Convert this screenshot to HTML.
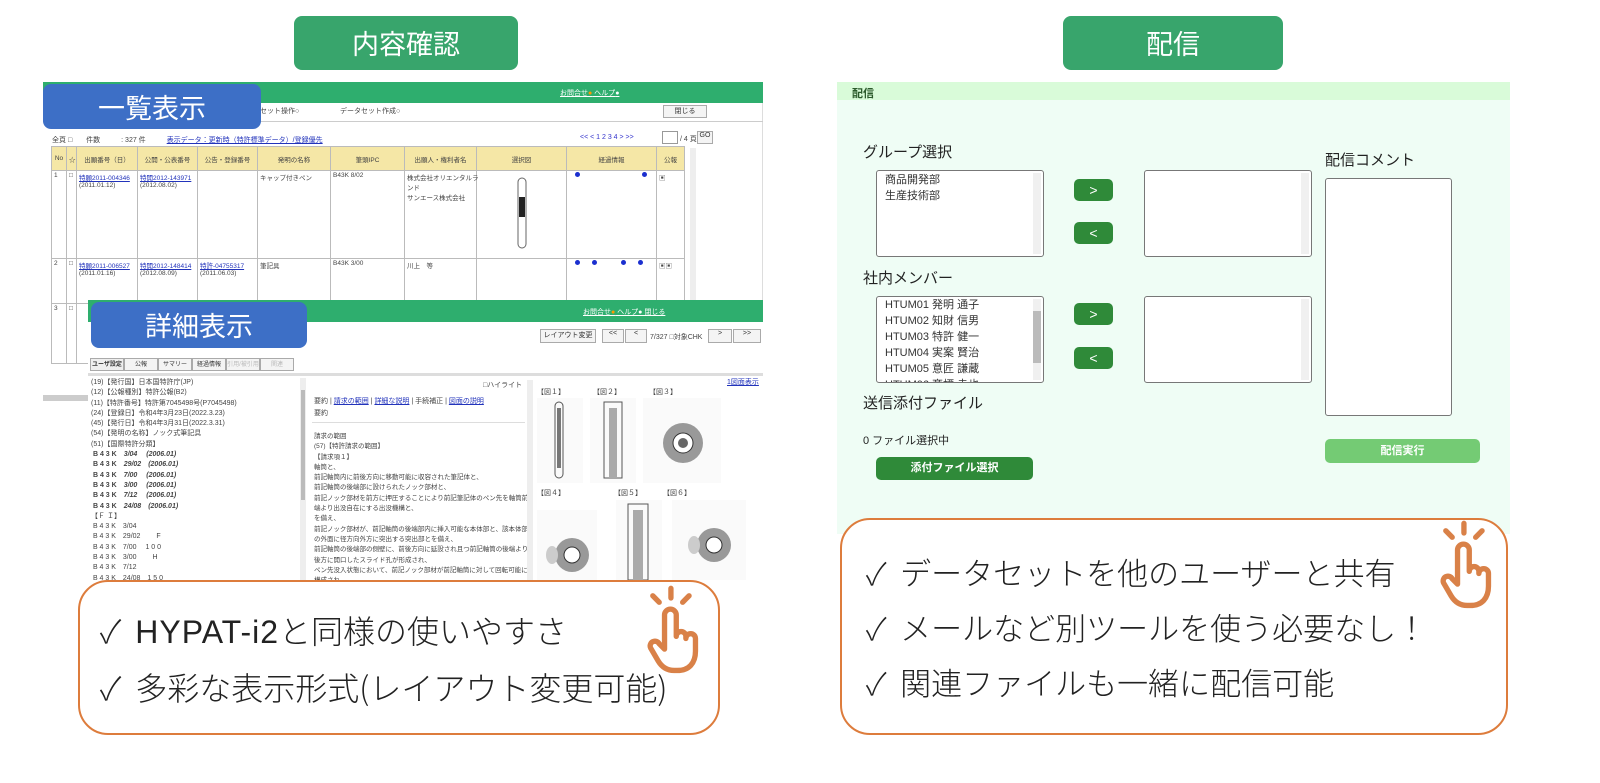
<!DOCTYPE html>
<html><head><meta charset="utf-8">
<style>
*{margin:0;padding:0;box-sizing:border-box}
body{width:1600px;height:783px;background:#fff;position:relative;overflow:hidden;font-family:"Liberation Sans","Noto Sans CJK JP",sans-serif;color:#333}
.a{position:absolute}
.pill{background:#38a56c;color:#fff;border-radius:8px;font-size:27px;text-align:center;line-height:53px;font-family:"Noto Sans CJK JP",sans-serif}
.blue{background:#3d6fc6;color:#fff;border-radius:8px;font-size:27px;text-align:center;font-family:"Noto Sans CJK JP",sans-serif}
.gbar{background:#2eae6e}
.t{font-size:7px;color:#444;white-space:nowrap}
.lk{color:#2233bb;text-decoration:underline}
.btn{border:1px solid #aaa;background:#f4f4f4;font-size:7px;text-align:center;color:#333}
table.l{border-collapse:collapse;font-size:6.5px}
table.l td{border:1px solid #bbb;vertical-align:top;padding:1px 2px;color:#444;white-space:nowrap}
table.l tr.h td{background:#f5e7a6;text-align:center;vertical-align:middle}
.dot{display:inline-block;width:5px;height:5px;border-radius:50%;background:#1b2fcf}
.call{border:2px solid #dd7c3c;border-radius:30px;background:#fff}
.cp{position:absolute;font-size:31px;color:#222;font-weight:300;white-space:nowrap;font-family:"Noto Sans CJK JP",sans-serif;line-height:40px}
.lab{font-size:15px;color:#222;font-family:"Noto Sans CJK JP",sans-serif}
.box{background:#fff;border:1px solid #777;border-radius:3px}
.gb{background:#2f8a39;border-radius:5px;color:#fff;text-align:center;font-size:14px}
.sb{position:absolute;right:2px;top:2px;bottom:2px;width:8px;background:#f0f0f0}
</style></head><body>

<div class="a pill" style="left:294px;top:16px;width:224px;height:54px">内容確認</div>
<div class="a pill" style="left:1063px;top:16px;width:220px;height:54px">配信</div>

<!-- list window -->
<div class="a" style="left:43px;top:82px;width:720px;height:325px;background:#fff;border-right:1px solid #ddd"></div>
<div class="a gbar" style="left:43px;top:82px;width:720px;height:21px"></div>
<div class="a t" style="left:560px;top:88px;color:#fff;text-decoration:underline">お問合せ<span style="color:#f90">●</span> ヘルプ<span style="color:#fff">●</span></div>
<div class="a" style="left:43px;top:103px;width:720px;height:19px;border-bottom:1px solid #ccc"></div>
<div class="a t" style="left:260px;top:106px">セット操作○</div>
<div class="a t" style="left:340px;top:106px">データセット作成○</div>
<div class="a btn" style="left:663px;top:105px;width:44px;height:13px">閉じる</div>
<div class="a t" style="left:52px;top:135px">全頁 □　　件数　　　: 327 件　　　<span class="lk">表示データ：更新時（特許標準データ）/登録優先</span></div>
<div class="a t" style="left:580px;top:134px;color:#33c">&lt;&lt; &lt; 1 2 3 4 &gt; &gt;&gt;</div>
<div class="a" style="left:662px;top:131px;width:16px;height:13px;border:1px solid #999;background:#fff"></div>
<div class="a t" style="left:680px;top:134px">/ 4 頁</div>
<div class="a btn" style="left:697px;top:131px;width:16px;height:13px">GO</div>
<table class="l a" style="left:51px;top:146px;width:634px;table-layout:fixed">
<tr class="h" style="height:24px"><td style="width:15px">No</td><td style="width:10px">☆</td><td style="width:61px">出願番号（日）</td><td style="width:60px">公開・公表番号</td><td style="width:60px">公告・登録番号</td><td style="width:73px">発明の名称</td><td style="width:74px">筆頭IPC</td><td style="width:72px">出願人・権利者名</td><td style="width:90px">選択図</td><td style="width:90px">経過情報</td><td>公報</td></tr>
<tr style="height:88px"><td>1</td><td>□</td><td><span class="lk">特願2011-004346</span><br>(2011.01.12)</td><td><span class="lk">特開2012-143971</span><br>(2012.08.02)</td><td></td><td>キャップ付きペン</td><td>B43K 8/02</td><td>株式会社オリエンタルラ<br>ンド<br>サンエース株式会社</td><td style="text-align:center"><svg width="30" height="80"><rect x="11" y="6" width="8" height="70" rx="4" fill="none" stroke="#666"/><rect x="12" y="25" width="6" height="20" fill="#222"/></svg></td><td style="padding-left:8px"><span class="dot"></span><span class="dot" style="margin-left:62px"></span></td><td>▣</td></tr>
<tr style="height:45px"><td>2</td><td>□</td><td><span class="lk">特願2011-006527</span><br>(2011.01.16)</td><td><span class="lk">特開2012-148414</span><br>(2012.08.09)</td><td><span class="lk">特許-04755317</span><br>(2011.06.03)</td><td>筆記具</td><td>B43K 3/00</td><td>川上　等</td><td></td><td style="padding-left:8px"><span class="dot"></span> <span class="dot" style="margin-left:10px"></span><span class="dot" style="margin-left:24px"></span><span class="dot" style="margin-left:12px"></span></td><td>▣▣</td></tr>
<tr style="height:60px"><td>3</td><td>□</td><td></td><td></td><td></td><td></td><td></td><td></td><td></td><td></td><td></td></tr>
</table>
<div class="a" style="left:690px;top:148px;width:6px;height:250px;background:#eee"></div>
<div class="a" style="left:43px;top:395px;width:50px;height:6px;background:#ccc"></div>

<div class="a blue" style="left:43px;top:84px;width:218px;height:45px;line-height:45px">一覧表示</div>

<!-- detail window -->
<div class="a" style="left:88px;top:300px;width:675px;height:340px;background:#fff"></div>
<div class="a gbar" style="left:88px;top:300px;width:675px;height:22px"></div>
<div class="a t" style="left:583px;top:307px;color:#fff;text-decoration:underline">お問合せ<span style="color:#f90">●</span> ヘルプ● 閉じる</div>
<div class="a btn" style="left:540px;top:329px;width:56px;height:14px">レイアウト変更</div>
<div class="a btn" style="left:602px;top:329px;width:22px;height:14px">&lt;&lt;</div>
<div class="a btn" style="left:625px;top:329px;width:22px;height:14px">&lt;</div>
<div class="a t" style="left:650px;top:332px">7/327 □対象CHK</div>
<div class="a btn" style="left:708px;top:329px;width:24px;height:14px">&gt;</div>
<div class="a btn" style="left:733px;top:329px;width:28px;height:14px">&gt;&gt;</div>
<div class="a" style="left:90px;top:358px;width:270px;height:13px;display:flex;font-size:6px">
<div class="btn" style="width:34px;background:#eee;font-weight:bold;font-size:6px">ユーザ設定</div><div class="btn" style="width:34px;font-size:6px">公報</div><div class="btn" style="width:34px;font-size:6px">サマリー</div><div class="btn" style="width:34px;font-size:6px">経過情報</div><div class="btn" style="width:34px;color:#bbb;font-size:6px">引用/被引用</div><div class="btn" style="width:34px;color:#bbb;font-size:6px">関連</div></div>
<div class="a" style="left:88px;top:373px;width:675px;height:3px;background:#ddd"></div>
<div class="a t" style="left:91px;top:378px;line-height:10.3px">(19)【発行国】日本国特許庁(JP)<br>(12)【公報種別】特許公報(B2)<br>(11)【特許番号】特許第7045498号(P7045498)<br>(24)【登録日】令和4年3月23日(2022.3.23)<br>(45)【発行日】令和4年3月31日(2022.3.31)<br>(54)【発明の名称】ノック式筆記具<br>(51)【国際特許分類】<br><b>&nbsp;B 4 3 K　<i>3/04　 (2006.01)</i></b><br><b>&nbsp;B 4 3 K　<i>29/02　(2006.01)</i></b><br><b>&nbsp;B 4 3 K　<i>7/00　 (2006.01)</i></b><br><b>&nbsp;B 4 3 K　<i>3/00　 (2006.01)</i></b><br><b>&nbsp;B 4 3 K　<i>7/12　 (2006.01)</i></b><br><b>&nbsp;B 4 3 K　<i>24/08　(2006.01)</i></b><br>【Ｆ Ｉ】<br>&nbsp;B 4 3 K　3/04<br>&nbsp;B 4 3 K　29/02　　 F<br>&nbsp;B 4 3 K　7/00　 1 0 0<br>&nbsp;B 4 3 K　3/00　　 H<br>&nbsp;B 4 3 K　7/12<br>&nbsp;B 4 3 K　24/08　1 5 0</div>
<div class="a" style="left:300px;top:378px;width:6px;height:260px;background:#eee"></div>
<div class="a" style="left:301px;top:390px;width:4px;height:110px;background:#bbb"></div>
<div class="a t" style="left:483px;top:380px">□ハイライト</div>
<div class="a t" style="left:314px;top:396px">要約 | <span class="lk">請求の範囲</span> | <span class="lk">詳細な説明</span> | 手続補正 | <span class="lk">図面の説明</span></div>
<div class="a t" style="left:314px;top:408px">要約</div>
<div class="a" style="left:312px;top:422px;width:213px;height:1px;background:#ddd"></div>
<div class="a t" style="left:314px;top:432px;line-height:10.3px;font-size:6.5px">請求の範囲<br>(57)【特許請求の範囲】<br>【請求項１】<br>軸筒と、<br>前記軸筒内に前後方向に移動可能に収容された筆記体と、<br>前記軸筒の後端部に設けられたノック部材と、<br>前記ノック部材を前方に押圧することにより前記筆記体のペン先を軸筒前<br>端より出没自在にする出没機構と、<br>を備え、<br>前記ノック部材が、前記軸筒の後端部内に挿入可能な本体部と、該本体部<br>の外面に径方向外方に突出する突出部とを備え、<br>前記軸筒の後端部の側壁に、前後方向に延設され且つ前記軸筒の後端より<br>後方に開口したスライド孔が形成され、<br>ペン先没入状態において、前記ノック部材が前記軸筒に対して回転可能に<br>構成され</div>
<div class="a" style="left:527px;top:380px;width:6px;height:258px;background:#eee"></div>
<div class="a" style="left:533px;top:376px;width:230px;height:264px;background:#fff"></div>
<div class="a t lk" style="left:727px;top:377px">1図面表示</div>
<div class="a t" style="left:537px;top:387px">【図１】　　　　　【図２】　　　　　【図３】</div>
<div class="a" style="left:537px;top:398px;width:46px;height:85px;background:#fafafa"><svg width="46" height="85"><rect x="18" y="4" width="8" height="76" rx="4" fill="none" stroke="#555"/><rect x="20" y="10" width="4" height="60" fill="#777"/></svg></div>
<div class="a" style="left:590px;top:398px;width:46px;height:85px;background:#fafafa"><svg width="46" height="85"><rect x="14" y="4" width="18" height="76" fill="none" stroke="#555"/><rect x="19" y="10" width="8" height="70" fill="#aaa"/></svg></div>
<div class="a" style="left:643px;top:398px;width:78px;height:85px;background:#fafafa"><svg width="78" height="85"><circle cx="40" cy="45" r="20" fill="#999"/><circle cx="40" cy="45" r="10" fill="#fff" stroke="#333"/><circle cx="40" cy="45" r="5" fill="#666"/></svg></div>
<div class="a t" style="left:537px;top:488px">【図４】　　　　　　　　【図５】　　　　【図６】</div>
<div class="a" style="left:537px;top:510px;width:60px;height:80px;background:#fafafa"><svg width="60" height="80"><circle cx="35" cy="45" r="17" fill="#999"/><circle cx="35" cy="45" r="8" fill="#fff" stroke="#333"/><ellipse cx="15" cy="45" rx="6" ry="9" fill="#ccc"/></svg></div>
<div class="a" style="left:616px;top:500px;width:46px;height:80px;background:#fafafa"><svg width="46" height="80"><rect x="12" y="4" width="20" height="76" fill="none" stroke="#555"/><rect x="17" y="10" width="10" height="70" fill="#aaa"/></svg></div>
<div class="a" style="left:672px;top:500px;width:74px;height:80px;background:#fafafa"><svg width="74" height="80"><circle cx="42" cy="45" r="17" fill="#999"/><circle cx="42" cy="45" r="8" fill="#fff" stroke="#333"/><ellipse cx="22" cy="45" rx="6" ry="9" fill="#ccc"/></svg></div>

<div class="a blue" style="left:91px;top:302px;width:216px;height:46px;line-height:46px">詳細表示</div>

<!-- left callout -->
<div class="a call" style="left:78px;top:580px;width:642px;height:155px"></div>
<div class="cp" style="left:100px;top:610px;font-size:32px">✓&nbsp; <span style="font-family:'Liberation Sans',sans-serif;font-weight:normal;letter-spacing:1px">HYPAT-i2</span>と同様の使いやすさ</div>
<div class="cp" style="left:100px;top:667px;font-size:32px">✓&nbsp; 多彩な表示形式(レイアウト変更可能)</div>
<svg class="a" style="left:640px;top:585px" width="64" height="92" viewBox="0 0 60 86"><g fill="none" stroke="#d98148" stroke-width="5" stroke-linecap="round" stroke-linejoin="round"><path d="M29 3v9M12 10l6 6M46 10l-6 6"/><path d="M23 60V28a5.5 5.5 0 0 1 11 0v20a4.5 4.5 0 0 1 9 0v2a4.5 4.5 0 0 1 9 0v12c0 11-6 18-17 18h-3c-7 0-12-4-15-9l-7-12a4 4 0 0 1 8-4z"/></g></svg>

<!-- right panel -->
<div class="a" style="left:837px;top:82px;width:673px;height:452px;background:#effdf5"></div>
<div class="a" style="left:837px;top:82px;width:673px;height:18px;background:#d9fbd9"></div>
<div class="a" style="left:852px;top:85px;font-size:11px;font-weight:bold;color:#2b5a2b">配信</div>
<div class="a lab" style="left:863px;top:141px">グループ選択</div>
<div class="a lab" style="left:1325px;top:149px">配信コメント</div>
<div class="a box" style="left:876px;top:170px;width:168px;height:87px"><div class="sb"></div><div style="font-size:11px;padding:1px 0 0 8px;line-height:16px;color:#333">商品開発部<br>生産技術部</div></div>
<div class="a gb" style="left:1074px;top:179px;width:39px;height:22px;line-height:22px">&gt;</div>
<div class="a gb" style="left:1074px;top:222px;width:39px;height:22px;line-height:22px">&lt;</div>
<div class="a box" style="left:1144px;top:170px;width:168px;height:87px"><div class="sb"></div></div>
<div class="a box" style="left:1325px;top:178px;width:127px;height:238px"></div>
<div class="a lab" style="left:863px;top:267px">社内メンバー</div>
<div class="a box" style="left:876px;top:296px;width:168px;height:87px;overflow:hidden"><div class="sb"><div style="margin-top:12px;height:52px;background:#bbb"></div></div><div style="font-size:11px;padding:0 0 0 8px;line-height:16px;color:#333">HTUM01 発明 通子<br>HTUM02 知財 信男<br>HTUM03 特許 健一<br>HTUM04 実案 賢治<br>HTUM05 意匠 謙蔵<br>HTUM06 商標 幸也</div></div>
<div class="a gb" style="left:1074px;top:303px;width:39px;height:22px;line-height:22px">&gt;</div>
<div class="a gb" style="left:1074px;top:347px;width:39px;height:22px;line-height:22px">&lt;</div>
<div class="a box" style="left:1144px;top:296px;width:168px;height:87px"><div class="sb"></div></div>
<div class="a lab" style="left:863px;top:392px">送信添付ファイル</div>
<div class="a" style="left:863px;top:432px;font-size:11px;color:#222">0 ファイル選択中</div>
<div class="a gb" style="left:876px;top:457px;width:157px;height:23px;line-height:23px;font-size:11px;font-weight:bold">添付ファイル選択</div>
<div class="a gb" style="left:1325px;top:439px;width:155px;height:24px;line-height:24px;font-size:11px;font-weight:bold;background:#74cb74">配信実行</div>

<!-- right callout -->
<div class="a call" style="left:840px;top:518px;width:668px;height:217px"></div>
<div class="cp" style="left:866px;top:552px">✓&nbsp; データセットを他のユーザーと共有</div>
<div class="cp" style="left:866px;top:607px">✓&nbsp; メールなど別ツールを使う必要なし！</div>
<div class="cp" style="left:866px;top:662px">✓&nbsp; 関連ファイルも一緒に配信可能</div>
<svg class="a" style="left:1433px;top:520px" width="64" height="92" viewBox="0 0 60 86"><g fill="none" stroke="#d98148" stroke-width="5" stroke-linecap="round" stroke-linejoin="round"><path d="M29 3v9M12 10l6 6M46 10l-6 6"/><path d="M23 60V28a5.5 5.5 0 0 1 11 0v20a4.5 4.5 0 0 1 9 0v2a4.5 4.5 0 0 1 9 0v12c0 11-6 18-17 18h-3c-7 0-12-4-15-9l-7-12a4 4 0 0 1 8-4z"/></g></svg>

</body></html>
